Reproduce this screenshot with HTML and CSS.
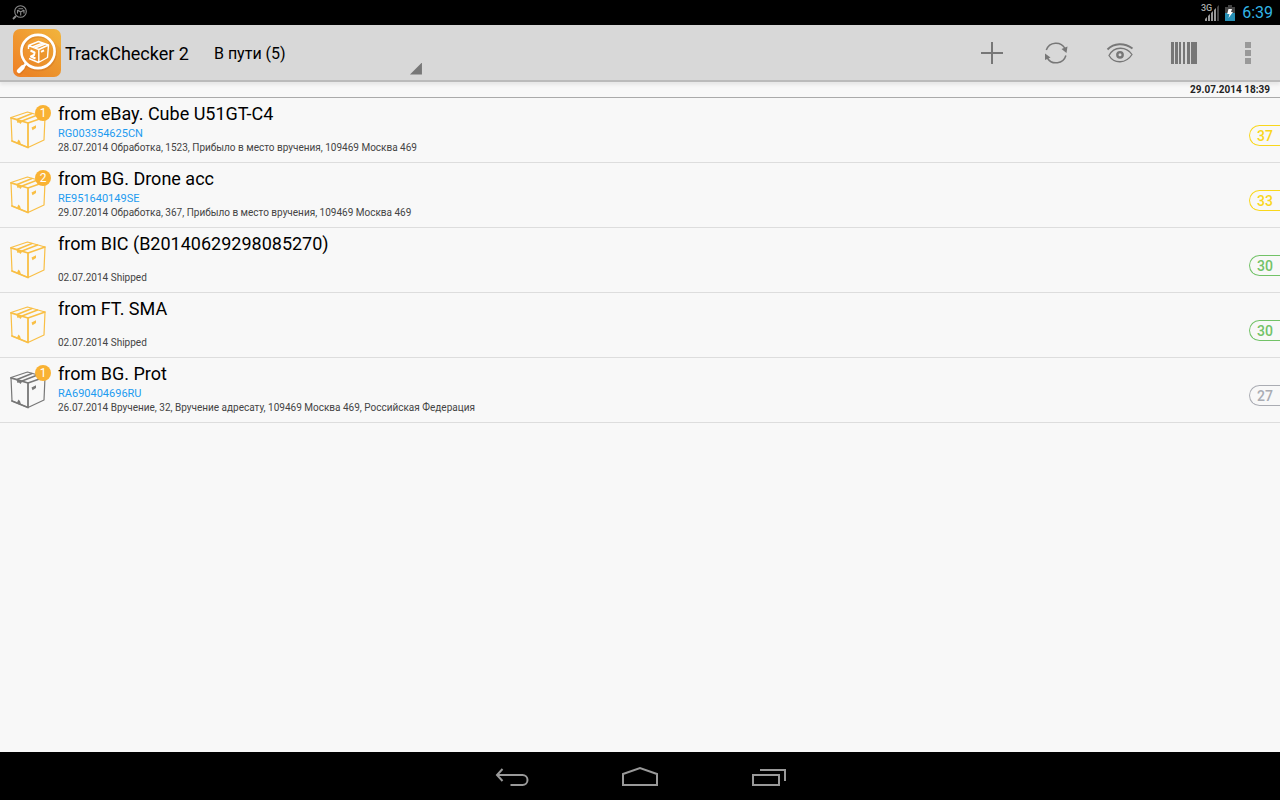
FILE: index.html
```html
<!DOCTYPE html>
<html lang="ru">
<head>
<meta charset="utf-8">
<meta name="viewport" content="width=device-width, initial-scale=1">
<title>TrackChecker 2</title>
<link rel="stylesheet" href="styles.css">
</head>
<body>
<svg class="defs" aria-hidden="true">
  <symbol id="box" viewBox="0 0 38 40">
    <g fill="none" stroke="currentColor" stroke-linejoin="round" stroke-linecap="round">
      <path stroke-width="1.200" d="M1 7.500 17.500 2 35 7 34 30 18 37.500 2 31Z"/>
      <path stroke-width="1.800" d="M1 7.800 18 13V37.500M2 31 18 37.500"/>
      <path stroke-width="1.500" d="M18 13 35 7M7 9.500 22 3.500M12 11 27.500 5"/>
    </g>
    <path fill="currentColor" d="M6.500 9.500 12.500 11.200 10.500 14 9 12.500 7.500 13ZM21.500 17.500 26 15.200V18L22.500 20.200ZM7 32.500 8.500 29.500 10 31 11 34.500Z"/>
  </symbol>
</svg>

<header class="status">
  <svg class="status-note" viewBox="0 0 16 16" aria-hidden="true">
    <g fill="none" stroke="#8c8c8c" stroke-width="1.1"><circle cx="8.500" cy="6.500" r="5.800"/><path stroke-width="1.800" d="M4 11 1 14"/><path d="M5.500 5 8.700 7 12 5M8.700 7V10.500M5.500 5V8.500M12 5V8.500M6.500 3.800H11"/></g>
  </svg>
  <div class="status-right">
    <span class="net">3G</span>
    <svg class="signal" viewBox="0 0 14 16" aria-hidden="true"><path fill="#999" d="M0 16v-2l2-2v4ZM3 16v-5l2-2v7ZM6 16V8l2-2v10Z"/><path fill="#999" d="M9 16V5l2-2V16Z"/><path fill="#444" d="M12 16V2L14 0v16Z"/></svg>
    <svg class="battery" viewBox="0 0 10 16" aria-hidden="true"><path fill="#444" d="M0 2h3V0h4v2h3v6H0Z"/><path fill="#278fb5" d="M0 8h10v8H0Z"/><path fill="#fff" d="M3.500 4H7L6 7h2l-4.500 6 1-4H2.200Z"/></svg>
    <time class="clock">6:39</time>
  </div>
</header>

<nav class="bar">
  <svg class="logo" viewBox="0 0 48 48" aria-hidden="true">
    <defs><linearGradient id="lg" x1="0" y1="1" x2="1" y2="0"><stop offset="0" stop-color="#ee7f26"/><stop offset="1" stop-color="#f2b53c"/></linearGradient></defs>
    <rect width="48" height="48" rx="7" fill="url(#lg)"/>
    <path d="M10 38 38 10 48 20V41a7 7 0 0 1-7 7H18L5 43Z" fill="#d9731c" opacity=".15"/>
    <g fill="none" stroke="#c76b1c" opacity=".35"><circle cx="25.500" cy="24" r="16.800" stroke-width="3"/><path stroke-width="5" stroke-linecap="round" d="M11 38 6.500 43.500"/></g>
    <g fill="none" stroke="#fff" stroke-linecap="round"><circle cx="25" cy="22.500" r="16.600" stroke-width="2.600"/><path stroke-width="2.500" d="M13 34.500 11 37"/><path stroke-width="4.500" d="M9.500 38.500 6 42"/></g>
    <g fill="none" stroke="#fff" stroke-width="1.400" stroke-linejoin="round"><path d="M15.500 16.500 25.500 12.500 35.500 16 34.500 28.500 25.500 33.500 16 29.500M15.500 16.500V20M15.500 16.500 25.800 20.500 35.500 16M25.800 20.500V33.500M19.500 18 30 14M22 19 32 15"/><path stroke-width="2" d="M17.500 21.500 21.500 23.500 21 26 18 27.500 22.500 29.500M28 22.800 31 21.300"/></g>
  </svg>
  <h1 class="title">TrackChecker 2</h1>
  <label class="filter"><select class="filter-select" aria-label="Фильтр"><option>В пути (5)</option></select></label>
  <div class="actions">
    <button class="action" type="button" aria-label="Добавить"><svg viewBox="0 0 32 32"><path fill="none" stroke="#777" stroke-width="2" d="M16 5v22M5 16h22"/></svg></button>
    <button class="action" type="button" aria-label="Обновить"><svg viewBox="0 0 32 32"><path fill="none" stroke="#777" stroke-width="1.500" d="M6.300 13A10.300 10.300 0 0 1 25 11.500M25.900 18.500A10.300 10.300 0 0 1 7.300 21"/><path fill="#777" d="M21.500 12 27.500 9.500 26.500 16ZM5 16.500 10.500 20.500 5 23Z"/></svg></button>
    <button class="action" type="button" aria-label="Отслеживание"><svg viewBox="0 0 32 32"><path fill="none" stroke="#777" stroke-width="2" d="M3.500 12.500C10 6 20 5.500 28.500 11.500"/><path fill="none" stroke="#777" stroke-width="1.300" d="M5 18.500C10 9 22 9 28 17.500 22 27 10 27 5 18.500Z"/><circle cx="16" cy="17.800" r="2.700" fill="none" stroke="#777" stroke-width="2.400"/></svg></button>
    <button class="action" type="button" aria-label="Штрихкод"><svg viewBox="0 0 32 32"><path fill="#777" d="M3 5h3v22H3ZM7 5h3v22H7ZM11 5h2v22h-2ZM15 5h2v22h-2ZM19 5h3v22h-3ZM23 5h6v22h-6Z"/></svg></button>
    <button class="action" type="button" aria-label="Меню"><svg viewBox="0 0 32 32"><path fill="#999" d="M13 5h6v6h-6ZM13 13h6v6h-6ZM13 21h6v6h-6Z"/></svg></button>
  </div>
</nav>

<main class="content">
  <p class="updated">29.07.2014 18:39</p>
  <ul class="list">
    <li class="row">
      <div class="icon"><svg class="box"><use href="#box"/></svg><span class="badge">1</span></div>
      <div class="info"><h2 class="name">from eBay. Cube U51GT-C4</h2><p class="code">RG003354625CN</p><p class="event">28.07.2014 Обработка, 1523, Прибыло в место вручения, 109469 Москва 469</p></div>
      <span class="days yellow">37</span>
    </li>
    <li class="row">
      <div class="icon"><svg class="box"><use href="#box"/></svg><span class="badge">2</span></div>
      <div class="info"><h2 class="name">from BG. Drone acc</h2><p class="code">RE951640149SE</p><p class="event">29.07.2014 Обработка, 367, Прибыло в место вручения, 109469 Москва 469</p></div>
      <span class="days yellow">33</span>
    </li>
    <li class="row">
      <div class="icon"><svg class="box"><use href="#box"/></svg></div>
      <div class="info"><h2 class="name">from BIC (B20140629298085270)</h2><p class="code"></p><p class="event">02.07.2014 Shipped</p></div>
      <span class="days green">30</span>
    </li>
    <li class="row">
      <div class="icon"><svg class="box"><use href="#box"/></svg></div>
      <div class="info"><h2 class="name">from FT. SMA</h2><p class="code"></p><p class="event">02.07.2014 Shipped</p></div>
      <span class="days green">30</span>
    </li>
    <li class="row">
      <div class="icon delivered"><svg class="box"><use href="#box"/></svg><span class="badge">1</span></div>
      <div class="info"><h2 class="name">from BG. Prot</h2><p class="code">RA690404696RU</p><p class="event">26.07.2014 Вручение, 32, Вручение адресату, 109469 Москва 469, Российская Федерация</p></div>
      <span class="days gray">27</span>
    </li>
  </ul>
</main>

<footer class="nav">
  <button class="key" type="button" aria-label="Назад"><svg viewBox="0 0 40 32"><path fill="none" stroke="#999" stroke-width="2" d="M10.500 9 5 15l5.500 6M5 15h25.500a5 5 0 0 1 0 10H18.500"/></svg></button>
  <button class="key" type="button" aria-label="Домой"><svg viewBox="0 0 40 32"><path fill="none" stroke="#999" stroke-width="2" d="M3 25V14L20 8l17 6v11Z"/></svg></button>
  <button class="key" type="button" aria-label="Недавние"><svg viewBox="0 0 40 32"><path fill="none" stroke="#999" stroke-width="2" d="M5 15h26v10H5ZM12 10h25v11"/></svg></button>
</footer>
</body>
</html>
```
FILE: styles.css
```css
* {
  box-sizing: border-box;
}

body {
  margin: 0;
  min-height: 100vh;
  display: flex;
  flex-direction: column;
  background: #f8f8f8;
  color: #000;
  font-family: Roboto, "Noto Sans", sans-serif;
}

h1, h2, p, ul {
  margin: 0;
  padding: 0;
  font-weight: 400;
}

button {
  border: 0;
  padding: 0;
  background: none;
  cursor: pointer;
}

.defs {
  position: absolute;
  width: 0;
  height: 0;
}

.status {
  display: flex;
  align-items: center;
  justify-content: space-between;
  height: 25px;
  padding: 0 7px 0 12px;
  background: #000;
}

.status-note {
  width: 16px;
  height: 16px;
}

.status-right {
  display: flex;
  align-items: center;
}

.net {
  align-self: flex-start;
  color: #aaa;
  font-size: 9px;
  font-weight: 500;
  line-height: 14px;
}

.signal {
  width: 14px;
  height: 16px;
  margin-right: 6px;
  margin-left: -7px;
}

.battery {
  width: 10px;
  height: 16px;
  margin-right: 7px;
}

.clock {
  color: #33b5e5;
  font-size: 16px;
  line-height: 24px;
}

.bar {
  display: flex;
  align-items: center;
  height: 57px;
  padding-left: 13px;
  border-bottom: 2px solid #bbb;
  background: #d8d8d8;
  box-shadow: 0 3px 3px #e8e8e8;
}

.logo {
  width: 48px;
  height: 48px;
}

.title {
  margin-left: 4px;
  padding-top: 2px;
  font-size: 18px;
  line-height: 24px;
}

.filter {
  position: relative;
  width: 220px;
  margin-left: 13px;
}

.filter::after {
  content: "";
  position: absolute;
  right: 0;
  bottom: 6px;
  width: 12px;
  height: 12px;
  background: #777;
  clip-path: polygon(100% 0, 100% 100%, 0 100%);
  pointer-events: none;
}

.filter-select {
  appearance: none;
  width: 100%;
  height: 56px;
  padding: 2px 12px 0;
  border: 0;
  background: none;
  color: #000;
  font: 16px Roboto, "Noto Sans", sans-serif;
}

.actions {
  display: flex;
  margin-left: auto;
}

.action {
  display: grid;
  place-items: center;
  width: 64px;
  height: 56px;
}

.action svg {
  width: 32px;
  height: 32px;
}

.content {
  flex: 1;
}

.updated {
  padding: 1px 10px 0 0;
  border-bottom: 1px solid #aaa;
  color: #222;
  font-size: 10px;
  font-weight: 700;
  line-height: 14px;
  text-align: right;
}

.list {
  list-style: none;
}

.row {
  display: flex;
  min-height: 65px;
  border-bottom: 1px solid #ddd;
}

.icon {
  position: relative;
  width: 58px;
  padding: 12px 0 0 10px;
  color: #f9bf45;
}

.delivered {
  color: #777;
}

.box {
  display: block;
  width: 38px;
  height: 40px;
}

.badge {
  position: absolute;
  top: 7px;
  left: 35px;
  width: 16px;
  height: 16px;
  border-radius: 50%;
  background: #f9b233;
  color: #fff;
  font-size: 12px;
  line-height: 16px;
  text-align: center;
}

.info {
  flex: 1;
  padding-top: 4px;
}

.name {
  margin-bottom: 1px;
  font-size: 18px;
  line-height: 24px;
}

.code {
  min-height: 14px;
  color: #1d9bf0;
  font-size: 11px;
  line-height: 14px;
}

.event {
  color: #444;
  font-size: 10px;
  line-height: 14px;
}

.days {
  align-self: flex-start;
  width: 31px;
  height: 21px;
  margin-top: 27px;
  padding-left: 7px;
  border: 1px solid currentColor;
  border-right: 0;
  border-radius: 11px 0 0 11px;
  font-size: 14px;
  font-weight: 500;
  line-height: 20px;
}

.yellow {
  color: #f9d71c;
}

.green {
  color: #72c267;
}

.gray {
  color: #aaacb3;
}

.nav {
  display: flex;
  justify-content: center;
  gap: 88px;
  height: 48px;
  background: #000;
}

.key {
  display: grid;
  place-items: center;
  width: 40px;
  height: 48px;
}

.key svg {
  width: 40px;
  height: 32px;
}
```
